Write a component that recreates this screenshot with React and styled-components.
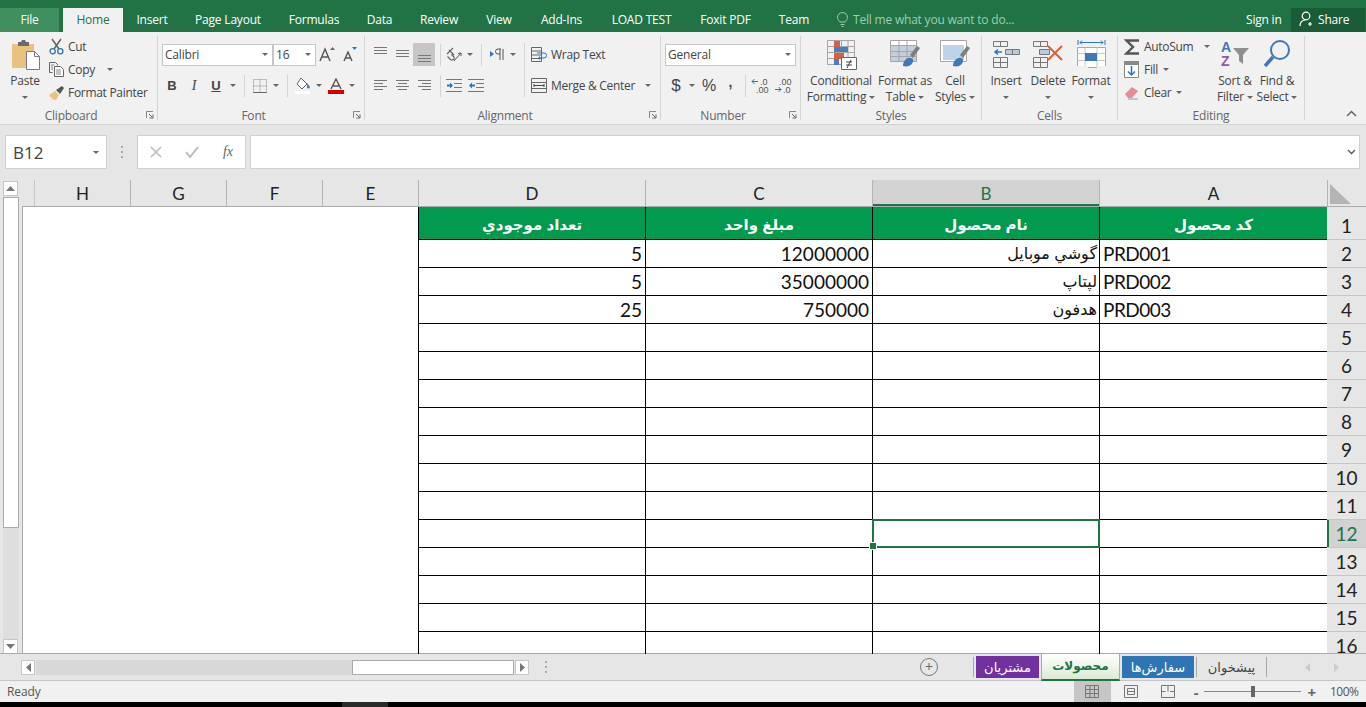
import React from 'react';
import styled, { createGlobalStyle } from 'styled-components';

const GlobalStyle = createGlobalStyle`
  html, body { margin: 0; padding: 0; background: #000; }
  * { box-sizing: border-box; }
  body { font-family: "Open Sans", "Noto Sans", sans-serif; font-size: 12px; color: #444; }
`;

const ARABIC = `"Liberation Sans", "DejaVu Sans", sans-serif`;
const CALIBRI = `"Lato", "Open Sans", sans-serif`;

const Page = styled.div`
  width: 1366px;
  height: 707px;
  overflow: hidden;
  display: flex;
  flex-direction: column;
  background: #e6e6e6;
`;

/* title bar + tabs */
const TabBar = styled.div`
  height: 32px;
  flex: none;
  background: #217346;
  display: flex;
  align-items: flex-end;
  color: #fff;
  letter-spacing: -0.2px;
`;

const MenuTab = styled.div`
  height: 24px;
  padding-bottom: 2px;
  width: ${(p) => p.$w}px;
  margin-left: ${(p) => p.$ml || 0}px;
  display: flex;
  align-items: center;
  justify-content: center;
  color: ${(p) => (p.$active ? '#217346' : '#fff')};
  background: ${(p) => (p.$active ? '#f1f1f1' : p.$file ? '#40905f' : 'transparent')};
`;

const TellMe = styled.div`
  height: 24px;
  padding-bottom: 2px;
  margin-left: 14px;
  width: 409px;
  display: flex;
  align-items: center;
  gap: 5px;
  color: #9fcdb0;
`;

const SignIn = styled.div`
  height: 24px;
  padding-bottom: 2px;
  width: 45px;
  display: flex;
  align-items: center;
`;

const Share = styled.div`
  height: 24px;
  padding-bottom: 2px;
  width: 74px;
  background: #1a5c38;
  display: flex;
  align-items: center;
  gap: 3px;
  padding-left: 8px;
`;

/* ribbon */
const Ribbon = styled.div`
  height: 93px;
  flex: none;
  background: #f1f1f1;
  border-bottom: 1px solid #d2d2d2;
  display: flex;
  position: relative;
`;

const Group = styled.div`
  width: ${(p) => p.$w}px;
  flex: none;
  display: flex;
  flex-direction: column;
`;

const GroupBody = styled.div`
  height: 76px;
  display: flex;
  padding-left: ${(p) => p.$pl || 0}px;
  padding-top: ${(p) => p.$pt || 0}px;
`;

const GroupFoot = styled.div`
  height: 16px;
  padding-bottom: 2px;
  display: flex;
  align-items: center;
  color: #666;
  letter-spacing: -0.2px;
`;

const FootLabel = styled.div`
  flex: 1;
  text-align: center;
`;

const Launcher = styled.div`
  width: 15px;
  display: flex;
  justify-content: center;
`;

const GroupSep = styled.div`
  width: 1px;
  height: 84px;
  margin-top: 4px;
  flex: none;
  background: #d4d4d4;
`;

const Stack = styled.div`
  display: flex;
  flex-direction: column;
  gap: ${(p) => p.$gap || 0}px;
  width: ${(p) => (p.$w ? `${p.$w}px` : 'auto')};
  margin-top: ${(p) => p.$mt || 0}px;
  margin-left: ${(p) => p.$ml || 0}px;
`;

const Row = styled.div`
  display: flex;
  align-items: center;
  height: 23px;
`;

const Tool = styled.div`
  width: ${(p) => p.$w || 22}px;
  height: 23px;
  flex: none;
  display: flex;
  align-items: center;
  justify-content: center;
  background: ${(p) => (p.$on ? '#c6c6c6' : 'transparent')};
`;

const LineTool = styled.div`
  height: 23px;
  display: flex;
  align-items: center;
  gap: ${(p) => p.$gap || 4}px;
  white-space: nowrap;
  letter-spacing: -0.3px;
`;

const ToolSep = styled.div`
  width: 1px;
  height: ${(p) => p.$h || 22}px;
  flex: none;
  background: #d4d4d4;
  margin-left: ${(p) => p.$ml || 0}px;
  margin-right: ${(p) => p.$mr || 0}px;
`;

const Caret = styled.span`
  display: inline-block;
  width: 0;
  height: 0;
  flex: none;
  margin-left: ${(p) => p.$ml || 0}px;
  border-left: 3px solid transparent;
  border-right: 3px solid transparent;
  border-top: 3px solid #666;
  vertical-align: middle;
`;

const Select = styled.div`
  width: ${(p) => p.$w}px;
  height: 22px;
  flex: none;
  margin-left: ${(p) => p.$ml || 0}px;
  background: #fff;
  border: 1px solid #c6c6c6;
  display: flex;
  align-items: center;
  justify-content: space-between;
  padding: 0 4px 0 2px;
  letter-spacing: -0.2px;
`;

const BigButton = styled.div`
  width: ${(p) => p.$w}px;
  flex: none;
  padding-top: 6px;
  display: flex;
  flex-direction: column;
  align-items: center;
`;

const BigIcon = styled.div`
  height: 35px;
  padding-top: 1px;
  display: flex;
  align-items: flex-start;
  justify-content: center;
`;

const BigLine = styled.div`
  height: 16px;
  line-height: 16px;
  white-space: nowrap;
  letter-spacing: -0.2px;
`;

const LetterIcon = styled.span`
  font-family: ${(p) => (p.$serif ? '"Liberation Serif", serif' : '"Liberation Sans", sans-serif')};
  font-weight: ${(p) => (p.$bold ? 700 : 400)};
  font-style: ${(p) => (p.$italic ? 'italic' : 'normal')};
  font-size: ${(p) => p.$size || 13}px;
  text-decoration: ${(p) => (p.$under ? 'underline' : 'none')};
  margin-bottom: ${(p) => p.$mb || 0}px;
  color: ${(p) => p.$color || '#444'};
`;

const Collapse = styled.div`
  position: absolute;
  right: 9px;
  bottom: 3px;
`;

/* formula bar */
const FormulaBar = styled.div`
  height: 55px;
  flex: none;
  padding: 10px 6px 11px 5px;
  display: flex;
  align-items: stretch;
`;

const FormulaBox = styled.div`
  width: ${(p) => (p.$w ? `${p.$w}px` : 'auto')};
  flex: ${(p) => (p.$w ? 'none' : 1)};
  margin-left: ${(p) => p.$ml || 0}px;
  background: #fff;
  border: 1px solid #d0d0d0;
  display: flex;
  align-items: center;
  justify-content: space-between;
  padding: 0 ${(p) => p.$pr || 5}px 0 7px;
`;

const NameText = styled.span`
  font-size: 17px;
  color: #444;
`;

const FormulaGrip = styled.div`
  width: 30px;
  flex: none;
  display: flex;
  align-items: center;
  justify-content: center;
`;

/* sheet */
const Sheet = styled.div`
  height: 474px;
  flex: none;
  display: flex;
  overflow: hidden;
`;

const VScroll = styled.div`
  width: 22px;
  flex: none;
  padding: 1px 3px 0;
  display: flex;
  flex-direction: column;
`;

const ScrollBtn = styled.div`
  width: ${(p) => p.$w || 15}px;
  height: ${(p) => p.$h || 15}px;
  flex: none;
  margin-left: ${(p) => p.$ml || 0}px;
  background: #fff;
  border: 1px solid #c6c6c6;
  display: flex;
  align-items: center;
  justify-content: center;
`;

const VThumb = styled.div`
  height: 331px;
  margin-top: 1px;
  background: #fff;
  border: 1px solid #ababab;
  flex: none;
`;

const VTrack = styled.div`
  flex: 1;
  background: #dedede;
`;

const SheetMain = styled.div`
  flex: 1;
  display: flex;
  flex-direction: column;
`;

const ColHead = styled.div`
  height: 27px;
  flex: none;
  display: flex;
  background: #e6e6e6;
  border-bottom: 1px solid #ababab;
`;

const HeadGap = styled.div`
  width: 13px;
  flex: none;
  border-right: 1px solid #c6c6c6;
`;

const ColCell = styled.div`
  width: ${(p) => p.$w}px;
  flex: none;
  display: flex;
  align-items: center;
  justify-content: center;
  font-family: ${CALIBRI};
  font-size: 17px;
  color: ${(p) => (p.$on ? '#217346' : '#222')};
  background: ${(p) => (p.$on ? '#d2d2d2' : 'transparent')};
  border-right: 1px solid #b4b4b4;
  box-shadow: ${(p) => (p.$on ? 'inset 0 -2px 0 #217346' : 'none')};
`;

const Corner = styled.div`
  flex: 1;
  display: flex;
  align-items: flex-end;
  padding: 0 0 2px 2px;
`;

const SheetBody = styled.div`
  flex: 1;
  display: flex;
  overflow: hidden;
`;

const BlankPane = styled.div`
  width: 396px;
  flex: none;
  background: #fff;
  border-left: 1px solid #ababab;
`;

const DataTable = styled.div`
  width: 909px;
  flex: none;
  background: #fff;
  display: grid;
  grid-template-columns: 227px 227px 227px 228px;
  grid-auto-rows: 28px;
  grid-template-rows: 33px;
`;

const Cell = styled.div`
  position: relative;
  z-index: ${(p) => (p.$selected ? 1 : 0)};
  border-left: 1px solid #000;
  border-bottom: 1px solid #000;
  display: flex;
  align-items: flex-end;
  padding: 0 ${(p) => (p.$arabic ? 2 : 3)}px 5px 3px;
  font-family: ${CALIBRI};
  font-size: 19px;
  line-height: 16px;
  letter-spacing: ${(p) => (p.$right ? 0 : -0.5)}px;
  color: #111;
  white-space: nowrap;
  justify-content: ${(p) => (p.$right ? 'flex-end' : 'flex-start')};

  ${(p) =>
    p.$selected &&
    `
    &::before {
      content: '';
      position: absolute;
      left: -1px;
      right: -1px;
      top: -1px;
      bottom: -1px;
      border: 2px solid #217346;
    }
    &::after {
      content: '';
      position: absolute;
      left: -4px;
      bottom: -3px;
      width: 6px;
      height: 6px;
      background: #217346;
      border: 1px solid #fff;
    }
  `}
`;

const ArabicText = styled.span`
  font-family: ${ARABIC};
  font-size: 16px;
  line-height: 16px;
`;

const TitleCell = styled.div`
  background: #019a4e;
  border-left: 1px solid #000;
  border-bottom: 1px solid #000;
  padding-top: 3px;
  display: flex;
  align-items: center;
  justify-content: center;
  color: #fff;
  font-family: ${ARABIC};
  font-weight: 700;
  font-size: 15px;
`;

const RowHeads = styled.div`
  flex: 1;
  display: flex;
  flex-direction: column;
`;

const RowHead = styled.div`
  height: ${(p) => p.$h}px;
  flex: none;
  display: flex;
  align-items: flex-end;
  justify-content: center;
  padding-bottom: 5px;
  font-family: ${CALIBRI};
  font-size: 19px;
  line-height: 16px;
  color: ${(p) => (p.$on ? '#217346' : '#222')};
  background: ${(p) => (p.$on ? '#d2d2d2' : '#e6e6e6')};
  border-bottom: 1px solid #c6c6c6;
  box-shadow: ${(p) => (p.$on ? 'inset 2px 0 0 #217346' : 'none')};
`;

/* sheet tabs + scrollbar */
const TabStrip = styled.div`
  height: 28px;
  flex: none;
  border-top: 1px solid #ababab;
  display: flex;
  align-items: center;
  padding-left: 21px;
  margin-top: -1px;
  background: #e6e6e6;
  border-bottom: 1px solid #c6c6c6;
`;

const HTrack = styled.div`
  width: 316px;
  height: 15px;
  margin-left: 1px;
  flex: none;
  background: #d8d8d8;
`;

const HThumb = styled.div`
  width: 162px;
  height: 15px;
  flex: none;
  background: #fff;
  border: 1px solid #ababab;
`;

const DotGrip = styled.div`
  margin-left: 15px;
  width: 4px;
  flex: none;
  display: flex;
  justify-content: center;
`;

const AddSheet = styled.div`
  margin-left: 372px;
  width: 18px;
  height: 18px;
  flex: none;
  border: 1px solid #777;
  border-radius: 50%;
  display: flex;
  align-items: center;
  justify-content: center;
  color: #666;
  font-size: 14px;
  line-height: 14px;
`;

const SheetSep = styled.div`
  width: 1px;
  height: 20px;
  flex: none;
  background: #a6a6a6;
  margin-left: ${(p) => p.$ml || 0}px;
  margin-right: ${(p) => p.$mr || 0}px;
`;

const SheetTab = styled.div`
  width: ${(p) => p.$w}px;
  height: 22px;
  flex: none;
  display: flex;
  align-items: center;
  justify-content: center;
  font-family: ${ARABIC};
  font-size: 13px;
  color: ${(p) => p.$color || '#444'};
  background: ${(p) => p.$bg || 'transparent'};
`;

const ActiveSheetTab = styled.div`
  width: 79px;
  height: 27px;
  margin: 0 2px 0 2px;
  flex: none;
  display: flex;
  align-items: center;
  justify-content: center;
  font-family: ${ARABIC};
  font-size: 12px;
  font-weight: 700;
  color: #217346;
  background: linear-gradient(#fff, #dcebd3);
  border-left: 1px solid #ababab;
  border-right: 1px solid #ababab;
  border-bottom: 2px solid #217346;
`;

const TabArrows = styled.div`
  flex: 1;
  display: flex;
  align-items: center;
  gap: 24px;
  padding-left: 38px;
`;

/* status */
const StatusBar = styled.div`
  height: 21px;
  flex: none;
  background: #f1f1f1;
  display: flex;
  align-items: center;
  padding-left: 7px;
  color: #555;
  letter-spacing: -0.1px;
`;

const StatusRight = styled.div`
  margin-left: auto;
  display: flex;
  align-items: center;
  height: 21px;
`;

const ViewBtn = styled.div`
  width: 37px;
  height: 21px;
  margin-left: ${(p) => p.$ml || 0}px;
  margin-right: ${(p) => p.$mr || 0}px;
  display: flex;
  align-items: center;
  justify-content: center;
  background: ${(p) => (p.$on ? '#c6c6c6' : 'transparent')};
`;

const ZoomSlider = styled.div`
  width: 97px;
  height: 1px;
  margin: 0 7px 0 5px;
  background: #888;
  position: relative;

  &::after {
    content: '';
    position: absolute;
    left: 47px;
    top: -5px;
    width: 4px;
    height: 11px;
    background: #666;
  }
`;

const ZoomSign = styled.span`
  font-size: 15px;
  font-weight: 700;
  color: #666;
  line-height: 14px;
`;

const ZoomValue = styled.span`
  width: 36px;
  margin-left: 14px;
  letter-spacing: -0.5px;
`;

const Taskbar = styled.div`
  flex: 1;
  background: #000;
  display: flex;
  padding-left: 342px;
`;

const TaskItem = styled.div`
  width: 46px;
  background: #2a2a2a;
`;

/* ---- icons ---- */
const Launch = () => (
  <svg width="8" height="8" viewBox="0 0 8 8">
    <path d="M.5 7V.5H7" fill="none" stroke="#888" />
    <path d="M3 3l3.500 3.500M7 3.500V7H3.500" fill="none" stroke="#666" />
  </svg>
);

const PasteIcon = () => (
  <svg width="32" height="32" viewBox="0 0 32 32">
    <path d="M3 5h22v24H3z" fill="#e8c27e" />
    <path d="M9 3h3l1-2h3l1 2h3v4H9z" fill="#6a6a6a" />
    <path d="M17.500 12.500h8l5 5v13h-13z" fill="#fff" stroke="#7a7a7a" />
    <path d="M25.500 12.500v5h5" fill="none" stroke="#7a7a7a" />
  </svg>
);

const CutIcon = () => (
  <svg width="15" height="17" viewBox="0 0 15 17">
    <path d="M3 1l7 10M12 1L5 11" stroke="#666" strokeWidth="1.600" fill="none" />
    <circle cx="3.700" cy="13.300" r="2.600" fill="none" stroke="#2e75b6" strokeWidth="1.300" />
    <circle cx="11.300" cy="13.300" r="2.600" fill="none" stroke="#2e75b6" strokeWidth="1.300" />
  </svg>
);

const CopyIcon = () => (
  <svg width="15" height="15" viewBox="0 0 15 15">
    <path d="M.5.500h6l2 2v1M.5.500v10h3" fill="none" stroke="#666" />
    <path d="M5.500 4.500h6l3 3v7h-9z" fill="#fff" stroke="#666" />
    <path d="M7 8h5M7 10h5M7 12h5M2 3h3M2 5h2M2 7h2" stroke="#888" />
  </svg>
);

const BrushIcon = () => (
  <svg width="16" height="16" viewBox="0 0 16 16">
    <path d="M0 10l6-4 4 4-3 5c-3 0-5-2-7-5z" fill="#e8c27e" />
    <path d="M7 5l6-4 2 2-4 6z" fill="#555" />
  </svg>
);

const Bars = ({ lines }) => (
  <svg width="15" height="15" viewBox="0 0 15 15">
    {lines.map(([x1, x2, y], i) => (
      <path key={i} d={`M${x1} ${y}.5H${x2}`} stroke="#777" />
    ))}
  </svg>
);

const GrowA = ({ up }) => (
  <svg width="17" height="17" viewBox="0 0 17 17">
    <path
      d={up ? 'M1 15L6 3l5 12M3 11h6' : 'M3 15L7 6l4 9M4.500 12h5'}
      fill="none"
      stroke="#555"
      strokeWidth="1.400"
    />
    <path d={up ? 'M11 4l2.500-3L16 4z' : 'M11 1l2.500 3L16 1z'} fill={up ? '#666' : '#2e75b6'} />
  </svg>
);

const BorderIcon = () => (
  <svg width="14" height="14" viewBox="0 0 14 14">
    <path d="M.5.500h13v13H.5zM7 .5v13M.5 7h13" fill="none" stroke="#888" strokeDasharray="1 1" />
    <path d="M.5 13.500h13" stroke="#666" />
  </svg>
);

const FillIcon = () => (
  <svg width="17" height="17" viewBox="0 0 17 17">
    <path d="M6 1l6 6-5 5-5-5z" fill="#fff" stroke="#666" />
    <path d="M12 6c1.500 2 3 3 3 4.500s-3 1-3 0z" fill="#4a7ebb" />
    <path d="M0 14h15v3H0z" fill="#fff" />
  </svg>
);

const FontColorIcon = () => (
  <svg width="16" height="16" viewBox="0 0 16 16">
    <path d="M3 11L8 1l5 10M5 8h6" fill="none" stroke="#555" strokeWidth="1.400" />
    <path d="M0 12h16v4H0z" fill="#d40000" />
  </svg>
);

const OrientIcon = () => (
  <svg width="17" height="16" viewBox="0 0 17 16">
    <path d="M1 7l6-6M3 3l5 5M1.500 9.500l3 3c1 1 2 .5 3 0s1-2 0-3l-2-2" fill="none" stroke="#666" strokeWidth="1.200" />
    <path d="M8 14L15 6M15 6l-3 .5M15 6v3" fill="none" stroke="#555" />
  </svg>
);

const RtlIcon = () => (
  <svg width="15" height="13" viewBox="0 0 15 13">
    <path d="M0 3l4 3-4 3z" fill="#2e75b6" />
    <path d="M11 1H8a2.500 2.500 0 000 5h2M10 1v11M13 1v11" fill="none" stroke="#555" />
  </svg>
);

const IndentIcon = ({ out }) => (
  <svg width="16" height="15" viewBox="0 0 16 15">
    <path d="M0 1.500h16M8 5.500h8M8 9.500h8M0 13.500h16" stroke="#777" />
    <path
      d={out ? 'M1 7.500l3-3v2h3v2H4v2z' : 'M7 7.500l-3-3v2H1v2h3v2z'}
      fill="#2e75b6"
    />
  </svg>
);

const WrapIcon = () => (
  <svg width="16" height="15" viewBox="0 0 16 15">
    <path d="M.5.500h10v14H.5zM.5 4h10M.5 8h10M.5 11.500h10" fill="none" stroke="#666" />
    <path d="M6 6h7a2 2 0 010 5H8" fill="none" stroke="#2e75b6" />
    <path d="M9 9l-2 2 2 2z" fill="#2e75b6" />
  </svg>
);

const MergeIcon = () => (
  <svg width="16" height="15" viewBox="0 0 16 15">
    <path d="M.5.500h15v14H.5zM.5 4.500h15M.5 10.500h15" fill="none" stroke="#666" />
    <path d="M3 7.500h10M3 6v3M13 6v3" fill="none" stroke="#444" />
  </svg>
);

const DecIcon = ({ more }) => (
  <svg width="19" height="17" viewBox="0 0 19 17">
    <path d={more ? 'M1 4.500h6' : 'M1 12.500h6'} stroke="#2e75b6" />
    <path d={more ? 'M3.500 2L1 4.500 3.500 7' : 'M4.500 10L7 12.500 4.500 15'} fill="none" stroke="#2e75b6" />
    <text x={more ? 9 : 5} y="7.500" fontSize="9" fontFamily="Liberation Sans" fill="#555">{more ? '.0' : '.00'}</text>
    <text x={more ? 5 : 9} y="16" fontSize="9" fontFamily="Liberation Sans" fill="#555">{more ? '.00' : '.0'}</text>
  </svg>
);

const CondIcon = () => (
  <svg width="31" height="31" viewBox="0 0 31 31">
    <path d="M1.500 1.500h27v24h-27zM1.500 7.500h27M1.500 13.500h27M1.500 19.500h27M8.500 1.500v24M15.500 1.500v24M22 1.500v24" fill="none" stroke="#a6a6a6" />
    <path d="M8 2h6v6H8z" fill="#d9603a" />
    <path d="M8 8h14v5H8z" fill="#4a7ebb" />
    <path d="M8 14h10v6H8z" fill="#d9603a" />
    <path d="M8 20h5v6H8z" fill="#4a7ebb" />
    <path d="M15.500 18.500h15v12h-15z" fill="#fff" stroke="#666" />
    <path d="M20 23h6M20 26h6M25 21l-4 8" stroke="#444" fill="none" />
  </svg>
);

const FormatTableIcon = ({ light }) => (
  <svg width="32" height="31" viewBox="0 0 32 31">
    <path d="M1.500 1.500h26v21h-26z" fill="#fff" stroke="#a6a6a6" />
    {light ? (
      <path d="M4 6h21v15H4z" fill="#bdd3ea" />
    ) : (
      <>
        <path d="M2 6h25v16H2z" fill="#c3cfdc" />
        <path d="M1.500 6.500h26M1.500 12.500h26M1.500 17.500h26M10 1.500v21M18 1.500v21" fill="none" stroke="#a6a6a6" />
      </>
    )}
    <path d="M21 16l7-9 3 2-7 10z" fill="#7f7f7f" />
    <path d="M14 27c0-5 4-9 8-8l2 1c1 4-3 9-10 7z" fill="#3f78b5" />
  </svg>
);

const InsertIcon = () => (
  <svg width="27" height="29" viewBox="0 0 27 29">
    <path d="M.5 2.500h14v5H.5zM7.500 2.500v5M.5 18.500h14v10H.5zM.5 23.500h14M7.500 18.500v10" fill="none" stroke="#777" />
    <path d="M12.500 10.500h14v5h-14zM19.500 10.500v5" fill="#b8cce0" stroke="#777" />
    <path d="M9 13H2.500M5 10.500L2 13l3 2.500" fill="none" stroke="#2e75b6" strokeWidth="1.500" />
  </svg>
);

const DeleteIcon = () => (
  <svg width="31" height="29" viewBox="0 0 31 29">
    <path d="M.5 2.500h14v5H.5zM7.500 2.500v5M.5 18.500h14v10H.5zM.5 23.500h14M7.500 18.500v10" fill="none" stroke="#777" />
    <path d="M6.500 10.500h10v5h-10z" fill="#b8cce0" stroke="#777" />
    <path d="M15 7l14 14M29 7L15 21" stroke="#d9603a" strokeWidth="2" />
  </svg>
);

const FormatCellIcon = () => (
  <svg width="29" height="32" viewBox="0 0 29 32">
    <path d="M1 1v5M28 1v5M3 3.500h23M5 1.500l-2 2 2 2M24 1.500l2 2-2 2" fill="none" stroke="#2e75b6" />
    <path d="M.5 8.500h28v20H.5z" fill="#fff" stroke="#a6a6a6" />
    <path d="M.5 14.500h28M.5 21.500h28M8 8.500v20M20 8.500v20" stroke="#c6c6c6" />
    <path d="M8 14h12v8H8z" fill="#3f78b5" />
    <path d="M0 27h10l2 3h8v-3h9v5H0z" fill="#f1f1f1" />
  </svg>
);

const SigmaIcon = () => (
  <svg width="17" height="16" viewBox="0 0 17 16">
    <path d="M15 1.500H2.500l6.500 6.500-6.500 6.500H15" fill="none" stroke="#555" strokeWidth="2.400" />
  </svg>
);

const FillDownIcon = () => (
  <svg width="15" height="17" viewBox="0 0 15 17">
    <path d="M0 0h15v4H0z" fill="#888" />
    <path d="M.5 3.500h14v13H.5z" fill="#fff" stroke="#888" />
    <path d="M7.500 5v9M4 10.500L7.500 14l3.500-3.500" fill="none" stroke="#2e75b6" strokeWidth="1.500" />
  </svg>
);

const EraserIcon = () => (
  <svg width="15" height="15" viewBox="0 0 15 15">
    <path d="M1 9l7-7 6 4-6 7H4z" fill="#e88a97" />
    <path d="M4 14h10" stroke="#999" />
  </svg>
);

const SortIcon = () => (
  <svg width="30" height="29" viewBox="0 0 30 29">
    <text x="1" y="13" fontSize="14" fontWeight="700" fontFamily="Liberation Sans" fill="#3f78b5">A</text>
    <text x="1" y="27" fontSize="14" fontWeight="700" fontFamily="Liberation Sans" fill="#8e5aa8">Z</text>
    <path d="M13 9h16l-6 7v9l-4-3v-6z" fill="#8f8f8f" />
  </svg>
);

const FindIcon = () => (
  <svg width="30" height="30" viewBox="0 0 30 30">
    <circle cx="18" cy="11" r="9" fill="none" stroke="#3f78b5" strokeWidth="2" />
    <path d="M11 18l-8 9" stroke="#3f78b5" strokeWidth="3.500" />
  </svg>
);

const ArrowH = ({ left, color = '#777' }) => (
  <svg width="5" height="9" viewBox="0 0 5 9">
    <path d={left ? 'M5 0v9L0 4.500z' : 'M0 0v9l5-4.500z'} fill={color} />
  </svg>
);

const ArrowV = ({ up }) => (
  <svg width="9" height="5" viewBox="0 0 9 5">
    <path d={up ? 'M0 5h9L4.500 0z' : 'M0 0h9L4.500 5z'} fill="#777" />
  </svg>
);

const Dots = () => (
  <svg width="3" height="12" viewBox="0 0 3 12">
    <path d="M0 0h2v2H0zM0 5h2v2H0zM0 10h2v2H0z" fill="#aaa" />
  </svg>
);

const rows = [
  ['5', '12000000', 'گوشي موبايل', 'PRD001'],
  ['5', '35000000', 'لپتاپ', 'PRD002'],
  ['25', '750000', 'هدفون', 'PRD003'],
];

const titles = ['تعداد موجودي', 'مبلغ واحد', 'نام محصول', 'کد محصول'];
const rowNumbers = Array.from({ length: 16 }, (_, i) => i + 1);

const App = () => (
  <Page>
    <GlobalStyle />

    <TabBar>
      <MenuTab $w={59} $file>File</MenuTab>
      <MenuTab $w={60} $ml={4} $active>Home</MenuTab>
      <MenuTab $w={58}>Insert</MenuTab>
      <MenuTab $w={94}>Page Layout</MenuTab>
      <MenuTab $w={78}>Formulas</MenuTab>
      <MenuTab $w={53}>Data</MenuTab>
      <MenuTab $w={66}>Review</MenuTab>
      <MenuTab $w={54}>View</MenuTab>
      <MenuTab $w={71}>Add-Ins</MenuTab>
      <MenuTab $w={89}>LOAD TEST</MenuTab>
      <MenuTab $w={79}>Foxit PDF</MenuTab>
      <MenuTab $w={58}>Team</MenuTab>
      <TellMe>
        <svg width="11" height="15" viewBox="0 0 11 15">
          <path d="M3 10C1 8 .5 6.500.5 5.500a5 5 0 0110 0c0 1-.5 2.500-2.500 4.500zM3.500 12.500h4M4.500 14.500h2" fill="none" stroke="#9fcdb0" />
        </svg>
        Tell me what you want to do...
      </TellMe>
      <SignIn>Sign in</SignIn>
      <Share>
        <svg width="16" height="16" viewBox="0 0 16 16">
          <circle cx="7" cy="5" r="3.800" fill="none" stroke="#fff" strokeWidth="1.200" />
          <path d="M1 15c0-3 2-5.500 5-6M11 11v4M9 13h4" fill="none" stroke="#fff" strokeWidth="1.200" />
        </svg>
        Share
      </Share>
    </TabBar>

    <Ribbon>
      <Group $w={157}>
        <GroupBody $pl={8}>
          <BigButton $w={34}>
            <BigIcon><PasteIcon /></BigIcon>
            <BigLine>Paste</BigLine>
            <BigLine><Caret /></BigLine>
          </BigButton>
          <Stack $ml={7} $mt={3}>
            <LineTool><CutIcon />Cut</LineTool>
            <LineTool><CopyIcon />Copy<Caret $ml={8} /></LineTool>
            <LineTool $gap={3}><BrushIcon />Format Painter</LineTool>
          </Stack>
        </GroupBody>
        <GroupFoot><FootLabel>Clipboard</FootLabel><Launcher><Launch /></Launcher></GroupFoot>
      </Group>
      <GroupSep />

      <Group $w={206}>
        <GroupBody $pl={3} $pt={11}>
          <Stack $gap={8}>
            <Row>
              <Select $w={111} $ml={1}>Calibri<Caret /></Select>
              <Select $w={43}>16<Caret /></Select>
              <Tool><GrowA up /></Tool>
              <Tool><GrowA /></Tool>
            </Row>
            <Row>
              <Tool><LetterIcon $bold>B</LetterIcon></Tool>
              <Tool><LetterIcon $italic $serif $size={14}>I</LetterIcon></Tool>
              <Tool><LetterIcon $bold $under>U</LetterIcon></Tool>
              <Tool $w={12}><Caret /></Tool>
              <ToolSep $ml={5} $mr={4} />
              <Tool><BorderIcon /></Tool>
              <Tool $w={10}><Caret /></Tool>
              <ToolSep $ml={6} $mr={4} />
              <Tool><FillIcon /></Tool>
              <Tool $w={10}><Caret /></Tool>
              <Tool $w={24}><FontColorIcon /></Tool>
              <Tool $w={8}><Caret /></Tool>
            </Row>
          </Stack>
        </GroupBody>
        <GroupFoot><FootLabel>Font</FootLabel><Launcher><Launch /></Launcher></GroupFoot>
      </Group>
      <GroupSep />

      <Group $w={295}>
        <GroupBody $pl={4} $pt={11}>
          <Stack $gap={8} $w={155}>
            <Row>
              <Tool><Bars lines={[[1, 14, 0], [1, 14, 3], [1, 14, 6]]} /></Tool>
              <Tool><Bars lines={[[1, 14, 3], [1, 14, 6], [1, 14, 9]]} /></Tool>
              <Tool $on><Bars lines={[[1, 14, 8], [1, 14, 11], [1, 14, 14]]} /></Tool>
              <ToolSep $ml={5} $mr={3} />
              <Tool $w={20}><OrientIcon /></Tool>
              <Tool $w={12}><Caret /></Tool>
              <ToolSep $ml={5} $mr={5} />
              <Tool $w={20}><RtlIcon /></Tool>
              <Tool $w={12}><Caret /></Tool>
            </Row>
            <Row>
              <Tool><Bars lines={[[1, 14, 2], [1, 10, 5], [1, 14, 8], [1, 10, 11]]} /></Tool>
              <Tool><Bars lines={[[1, 14, 2], [3, 12, 5], [1, 14, 8], [3, 12, 11]]} /></Tool>
              <Tool><Bars lines={[[1, 14, 2], [5, 14, 5], [1, 14, 8], [5, 14, 11]]} /></Tool>
              <ToolSep $ml={5} $mr={2} />
              <Tool><IndentIcon /></Tool>
              <Tool><IndentIcon out /></Tool>
            </Row>
          </Stack>
          <ToolSep $h={54} />
          <Stack $gap={8} $ml={6}>
            <LineTool><WrapIcon />Wrap Text</LineTool>
            <LineTool>
              <MergeIcon />Merge &amp; Center<Caret $ml={6} />
            </LineTool>
          </Stack>
        </GroupBody>
        <GroupFoot><FootLabel>Alignment</FootLabel><Launcher><Launch /></Launcher></GroupFoot>
      </Group>
      <GroupSep />

      <Group $w={139}>
        <GroupBody $pl={4} $pt={11}>
          <Stack $gap={8}>
            <Row><Select $w={131}>General<Caret /></Select></Row>
            <Row>
              <Tool><LetterIcon $size={17}>$</LetterIcon></Tool>
              <Tool $w={10}><Caret /></Tool>
              <Tool $w={24}><LetterIcon $size={16}>%</LetterIcon></Tool>
              <Tool $w={19}><LetterIcon $bold $size={14} $mb={8}>,</LetterIcon></Tool>
              <ToolSep $ml={5} $mr={3} />
              <Tool $w={23}><DecIcon more /></Tool>
              <Tool $w={23}><DecIcon /></Tool>
            </Row>
          </Stack>
        </GroupBody>
        <GroupFoot><FootLabel>Number</FootLabel><Launcher><Launch /></Launcher></GroupFoot>
      </Group>
      <GroupSep />

      <Group $w={180}>
        <GroupBody $pl={4}>
          <BigButton $w={72}>
            <BigIcon><CondIcon /></BigIcon>
            <BigLine>Conditional</BigLine>
            <BigLine>Formatting <Caret /></BigLine>
          </BigButton>
          <BigButton $w={56}>
            <BigIcon><FormatTableIcon /></BigIcon>
            <BigLine>Format as</BigLine>
            <BigLine>Table <Caret /></BigLine>
          </BigButton>
          <BigButton $w={44}>
            <BigIcon><FormatTableIcon light /></BigIcon>
            <BigLine>Cell</BigLine>
            <BigLine>Styles <Caret /></BigLine>
          </BigButton>
        </GroupBody>
        <GroupFoot><FootLabel>Styles</FootLabel></GroupFoot>
      </Group>
      <GroupSep />

      <Group $w={135}>
        <GroupBody $pl={3}>
          <BigButton $w={42}>
            <BigIcon><InsertIcon /></BigIcon>
            <BigLine>Insert</BigLine>
            <BigLine><Caret /></BigLine>
          </BigButton>
          <BigButton $w={42}>
            <BigIcon><DeleteIcon /></BigIcon>
            <BigLine>Delete</BigLine>
            <BigLine><Caret /></BigLine>
          </BigButton>
          <BigButton $w={44}>
            <BigIcon><FormatCellIcon /></BigIcon>
            <BigLine>Format</BigLine>
            <BigLine><Caret /></BigLine>
          </BigButton>
        </GroupBody>
        <GroupFoot><FootLabel>Cells</FootLabel></GroupFoot>
      </Group>
      <GroupSep />

      <Group $w={186}>
        <GroupBody $pl={6}>
          <Stack $w={90} $mt={3}>
            <LineTool $gap={3}><SigmaIcon />AutoSum<Caret $ml={8} /></LineTool>
            <LineTool $gap={5}><FillDownIcon />Fill <Caret /></LineTool>
            <LineTool $gap={5}><EraserIcon />Clear <Caret /></LineTool>
          </Stack>
          <BigButton $w={42}>
            <BigIcon><SortIcon /></BigIcon>
            <BigLine>Sort &amp;</BigLine>
            <BigLine>Filter <Caret /></BigLine>
          </BigButton>
          <BigButton $w={42}>
            <BigIcon><FindIcon /></BigIcon>
            <BigLine>Find &amp;</BigLine>
            <BigLine>Select <Caret /></BigLine>
          </BigButton>
        </GroupBody>
        <GroupFoot><FootLabel>Editing</FootLabel></GroupFoot>
      </Group>
      <GroupSep />

      <Collapse>
        <svg width="11" height="7" viewBox="0 0 11 7">
          <path d="M1 6l4.500-4.500L10 6" fill="none" stroke="#666" strokeWidth="1.500" />
        </svg>
      </Collapse>
    </Ribbon>

    <FormulaBar>
      <FormulaBox $w={102} $pr={7}>
        <NameText>B12</NameText>
        <Caret />
      </FormulaBox>
      <FormulaGrip><Dots /></FormulaGrip>
      <FormulaBox $w={109} $pr={12}>
        <svg width="12" height="12" viewBox="0 0 12 12" style={{ marginLeft: 5 }}>
          <path d="M1 1l10 10M11 1L1 11" stroke="#bbb" strokeWidth="1.500" />
        </svg>
        <svg width="14" height="12" viewBox="0 0 14 12">
          <path d="M1 6l4 5 8-10" fill="none" stroke="#bbb" strokeWidth="2" />
        </svg>
        <LetterIcon $serif $italic $size={14} $color="#666">fx</LetterIcon>
      </FormulaBox>
      <FormulaBox $ml={4} $pr={3}>
        <span />
        <svg width="9" height="6" viewBox="0 0 9 6">
          <path d="M1 1l3.500 3.500L8 1" fill="none" stroke="#555" strokeWidth="1.300" />
        </svg>
      </FormulaBox>
    </FormulaBar>

    <Sheet>
      <VScroll>
        <ScrollBtn><ArrowV up /></ScrollBtn>
        <VThumb />
        <VTrack />
        <ScrollBtn><ArrowV /></ScrollBtn>
      </VScroll>
      <SheetMain>
        <ColHead>
          <HeadGap />
          {['H', 'G', 'F', 'E'].map((c) => (
            <ColCell key={c} $w={96}>{c}</ColCell>
          ))}
          <ColCell $w={227}>D</ColCell>
          <ColCell $w={227}>C</ColCell>
          <ColCell $w={227} $on>B</ColCell>
          <ColCell $w={228}>A</ColCell>
          <Corner>
            <svg width="21" height="20" viewBox="0 0 21 20">
              <path d="M0 0l21 20H0z" fill="#b4b4b4" />
            </svg>
          </Corner>
        </ColHead>
        <SheetBody>
          <BlankPane />
          <DataTable>
            {titles.map((t) => (
              <TitleCell key={t}>{t}</TitleCell>
            ))}
            {rows.map((r) => (
              <React.Fragment key={r[3]}>
                <Cell $right>{r[0]}</Cell>
                <Cell $right>{r[1]}</Cell>
                <Cell $right $arabic><ArabicText>{r[2]}</ArabicText></Cell>
                <Cell>{r[3]}</Cell>
              </React.Fragment>
            ))}
            {rowNumbers.slice(4).map((n) =>
              [0, 1, 2, 3].map((c) => (
                <Cell key={`${n}-${c}`} $selected={n === 12 && c === 2} />
              ))
            )}
          </DataTable>
          <RowHeads>
            {rowNumbers.map((n) => (
              <RowHead key={n} $h={n === 1 ? 33 : 28} $on={n === 12}>{n}</RowHead>
            ))}
          </RowHeads>
        </SheetBody>
      </SheetMain>
    </Sheet>

    <TabStrip>
      <ScrollBtn $w={14} $h={15}><ArrowH left /></ScrollBtn>
      <HTrack />
      <HThumb />
      <ScrollBtn $w={14} $h={15} $ml={1}><ArrowH /></ScrollBtn>
      <DotGrip><Dots /></DotGrip>
      <AddSheet>+</AddSheet>
      <SheetSep $ml={35} $mr={2} />
      <SheetTab $w={63} $bg="#7030a0" $color="#fff">مشتريان</SheetTab>
      <ActiveSheetTab>محصولات</ActiveSheetTab>
      <SheetTab $w={72} $bg="#2e75b6" $color="#fff">سفارش‌ها</SheetTab>
      <SheetSep $ml={2} />
      <SheetTab $w={69}>پيشخوان</SheetTab>
      <SheetSep />
      <TabArrows>
        <ArrowH left color="#ccc" />
        <ArrowH color="#ccc" />
      </TabArrows>
    </TabStrip>

    <StatusBar>
      Ready
      <StatusRight>
        <ViewBtn $on>
          <svg width="14" height="13" viewBox="0 0 14 13">
            <path d="M.5.500h13v12H.5zM.5 4.500h13M.5 8.500h13M5 .5v12M9.500.500v12" fill="none" stroke="#777" />
          </svg>
        </ViewBtn>
        <ViewBtn $ml={2}>
          <svg width="14" height="13" viewBox="0 0 14 13">
            <path d="M.5.500h13v12H.5z" fill="none" stroke="#777" />
            <path d="M3.500 3.500h7v6h-7zM3.500 6.500h7" fill="none" stroke="#777" />
          </svg>
        </ViewBtn>
        <ViewBtn $mr={7}>
          <svg width="14" height="13" viewBox="0 0 14 13">
            <path d="M.5.500h13v12H.5zM7 .5v6M.5 6.500h4M9 6.500h4.500" fill="none" stroke="#777" />
          </svg>
        </ViewBtn>
        <ZoomSign>-</ZoomSign>
        <ZoomSlider />
        <ZoomSign>+</ZoomSign>
        <ZoomValue>100%</ZoomValue>
      </StatusRight>
    </StatusBar>
    <Taskbar><TaskItem /></Taskbar>
  </Page>
);

export default App;
